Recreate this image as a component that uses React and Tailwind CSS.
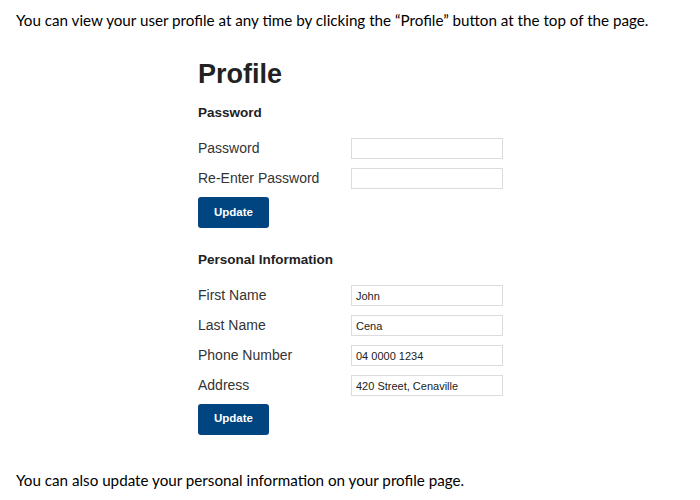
import React from 'react';

const arial = { fontFamily: '"Liberation Sans", Arial, sans-serif' };
const myriad = { fontFamily: 'Lato, "Open Sans", sans-serif' };

function Field({ label, value }) {
  return (
    <div className="flex items-center h-[30px]">
      <span className="w-[153px] shrink-0 text-[14px] text-[#333]">{label}</span>
      <input
        readOnly
        type="text"
        defaultValue={value}
        className="w-[152px] h-[21px] border border-[#dcdcdc] bg-white px-[4px] text-[11px] text-[#222] outline-none"
      />
    </div>
  );
}

function UpdateButton() {
  return (
    <button className="w-[71px] h-[31px] rounded-[3px] bg-[#004480] text-white text-[11.5px] font-bold">
      Update
    </button>
  );
}

export default function App() {
  return (
    <div className="w-[700px] h-[500px] bg-white overflow-hidden">
      <p className="pl-[16px] pt-[10px] text-[15.2px] leading-[20px] text-black" style={myriad}>
        You can view your user profile at any time by clicking the “Profile” button at the top of the page.
      </p>

      <div className="pl-[198px] pt-[29px]" style={arial}>
        <h1 className="text-[27px] leading-[30px] font-bold text-[#222]">Profile</h1>

        <h2 className="mt-[14px] text-[13.5px] font-bold text-[#222]">Password</h2>
        <div className="mt-[10px]">
          <Field label="Password" value="" />
          <Field label="Re-Enter Password" value="" />
        </div>
        <div className="mt-[4px]">
          <UpdateButton />
        </div>

        <h2 className="mt-[22px] text-[13.5px] font-bold text-[#222]">Personal Information</h2>
        <div className="mt-[10px]">
          <Field label="First Name" value="John" />
          <Field label="Last Name" value="Cena" />
          <Field label="Phone Number" value="04 0000 1234" />
          <Field label="Address" value="420 Street, Cenaville" />
        </div>
        <div className="mt-[3px]">
          <UpdateButton />
        </div>
      </div>

      <p className="pl-[16px] pt-[35px] text-[15.2px] leading-[20px] text-black" style={myriad}>
        You can also update your personal information on your profile page.
      </p>
    </div>
  );
}
